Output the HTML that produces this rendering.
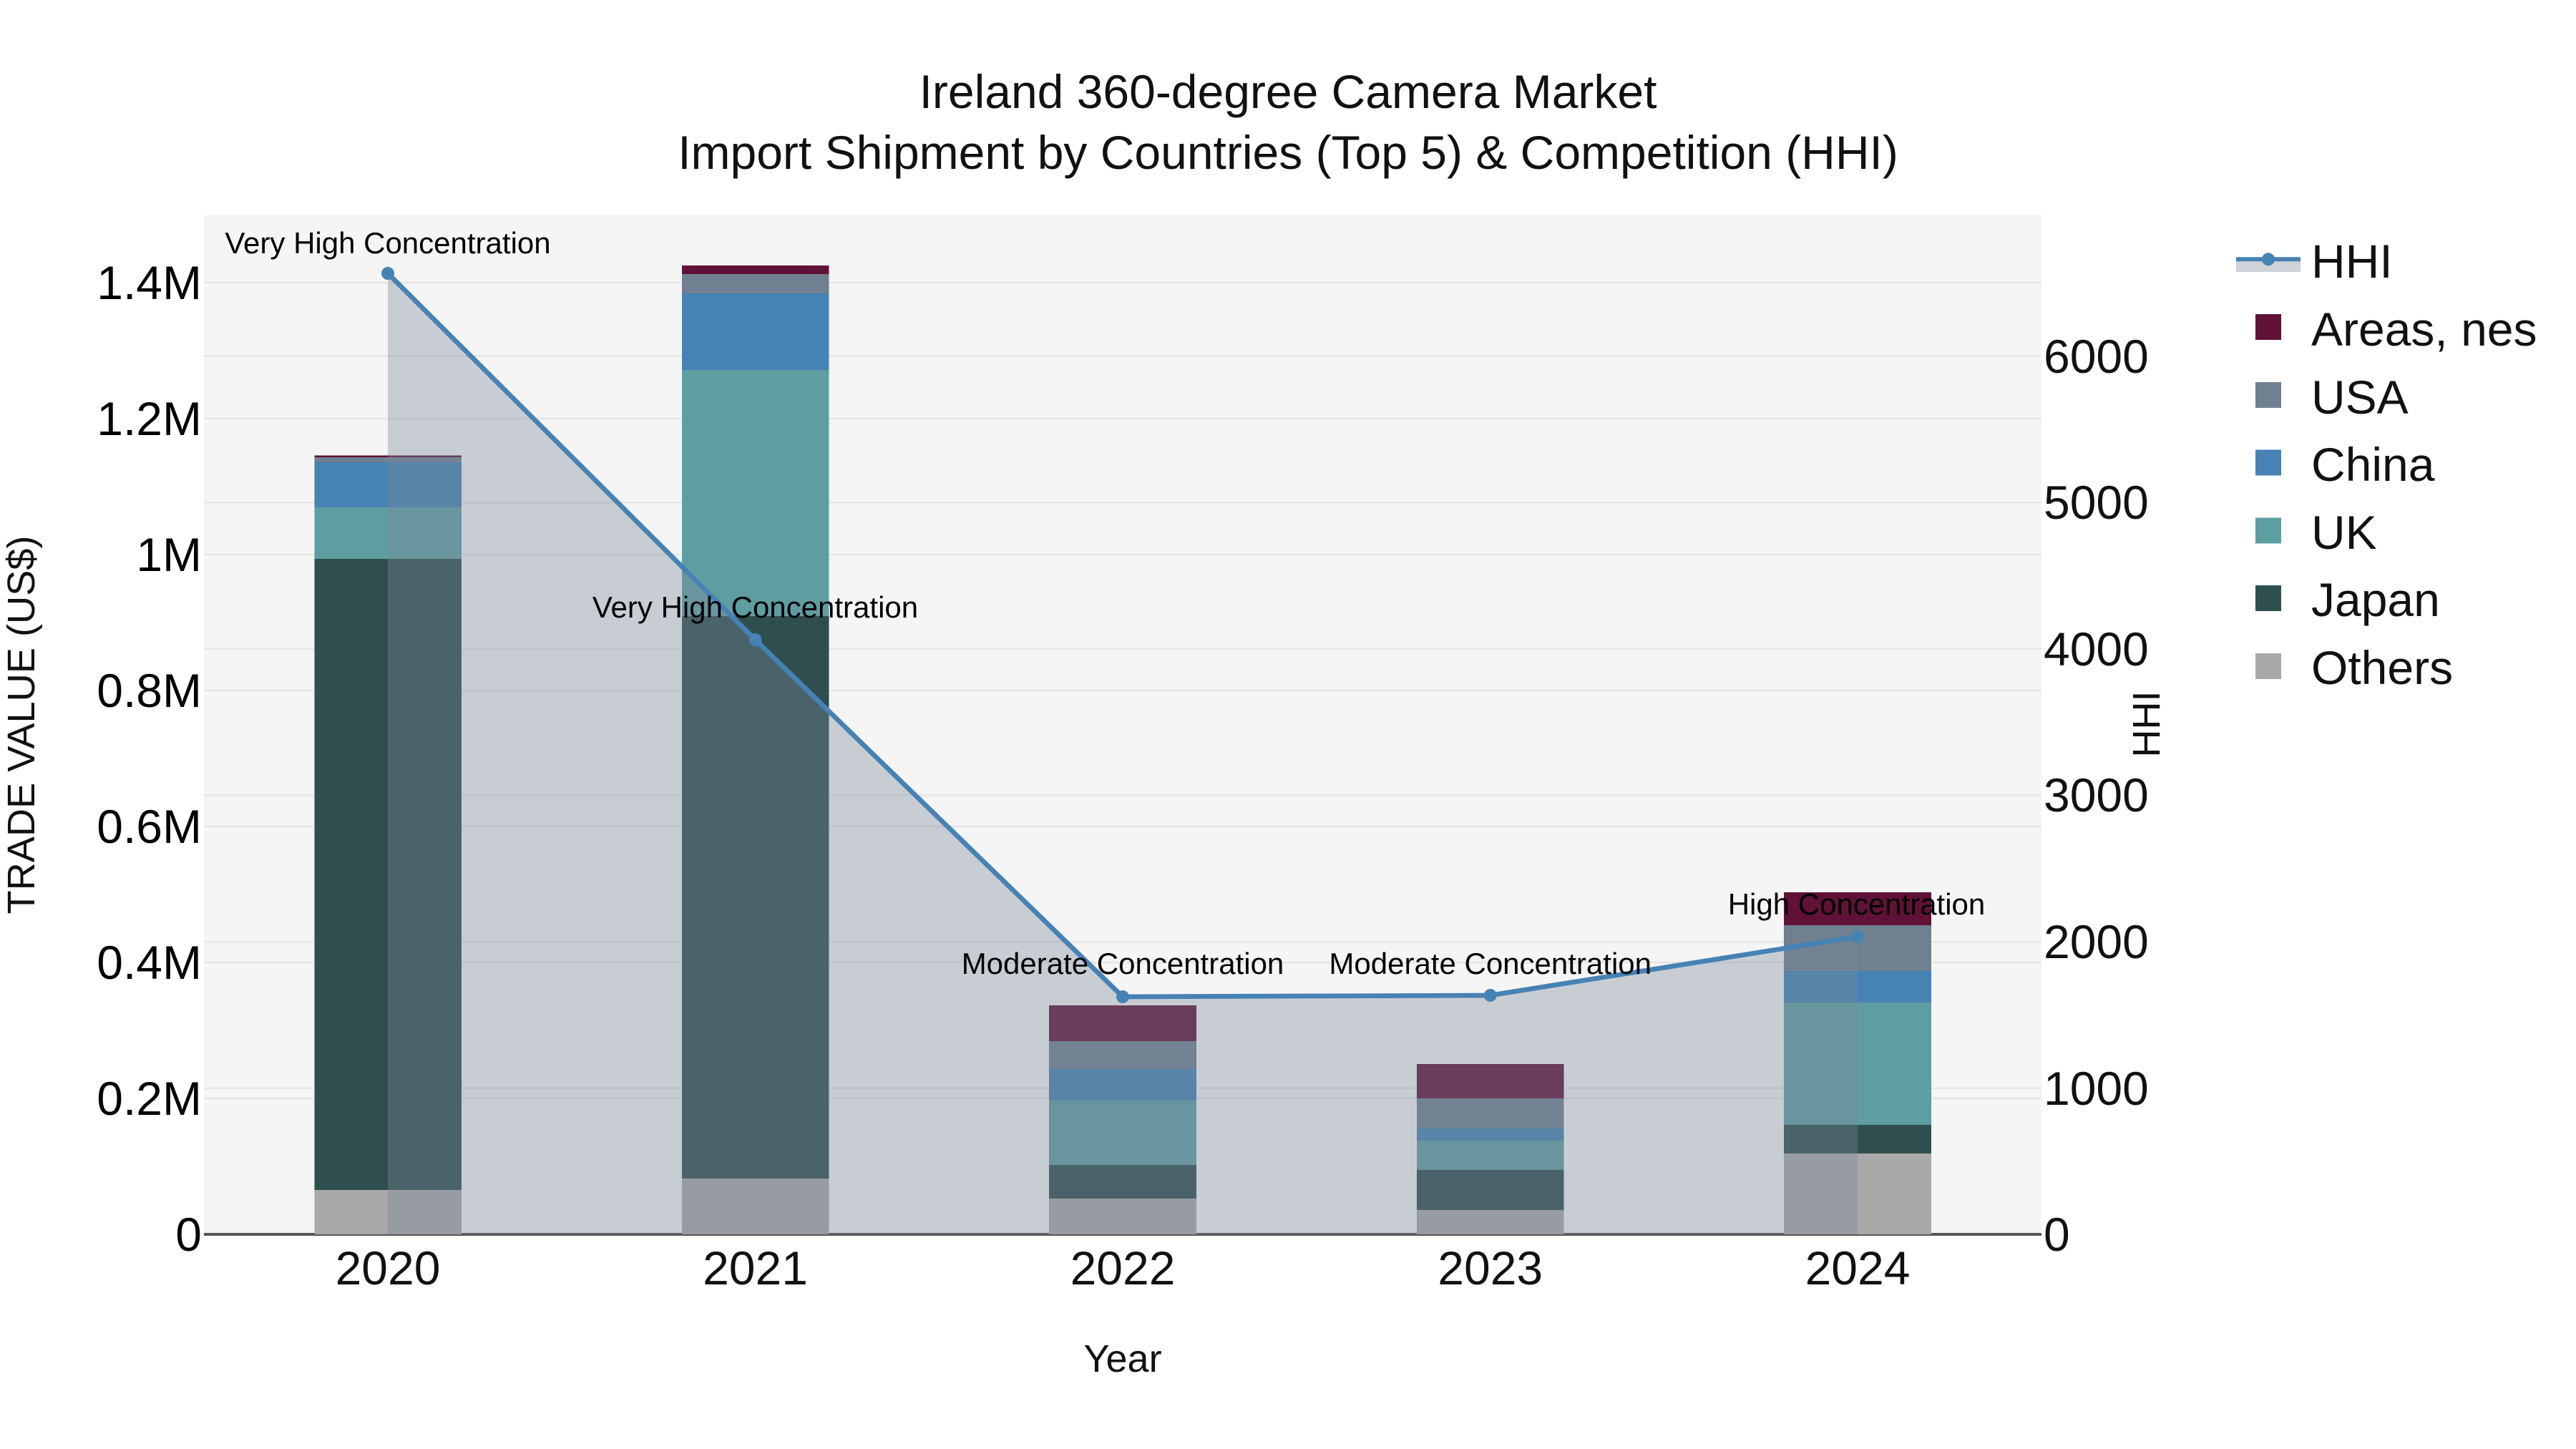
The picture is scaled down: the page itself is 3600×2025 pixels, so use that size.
<!DOCTYPE html>
<html>
<head>
<meta charset="utf-8">
<style>
html,body{margin:0;padding:0;background:#fff;width:3600px;height:2025px;overflow:hidden}
svg{display:block}
text{font-family:"Liberation Sans",Arial,sans-serif}
</style>
</head>
<body>
<svg width="3600" height="2025" viewBox="0 0 3600 2025" xmlns="http://www.w3.org/2000/svg">
<rect width="3600" height="2025" fill="#fff"/>
<rect x="285" y="300" width="2568" height="1425" fill="#f5f5f5"/>
<g stroke="#e6e6e6" stroke-width="2.5">
<path d="M285 395H2853M285 585H2853M285 775H2853M285 965H2853M285 1155H2853M285 1345H2853M285 1535H2853"/>
<path d="M285 497.7H2853M285 702.3H2853M285 906.9H2853M285 1111.5H2853M285 1316.1H2853M285 1520.7H2853"/>
</g>
<path d="M285 1725H2853" stroke="#555" stroke-width="4"/>

<g shape-rendering="crispEdges">
<!-- 2020 -->
<rect x="439.5" y="636.5" width="205.5" height="2.5" fill="#601236"/>
<rect x="439.5" y="639" width="205.5" height="7" fill="#708090"/>
<rect x="439.5" y="646" width="205.5" height="63" fill="#4682b4"/>
<rect x="439.5" y="709" width="205.5" height="72" fill="#5f9ea0"/>
<rect x="439.5" y="781" width="205.5" height="882" fill="#2f4f4f"/>
<rect x="439.5" y="1663" width="205.5" height="62" fill="#a9a9a9"/>
<!-- 2021 -->
<rect x="953" y="371" width="205.5" height="12" fill="#601236"/>
<rect x="953" y="383" width="205.5" height="27" fill="#708090"/>
<rect x="953" y="410" width="205.5" height="107" fill="#4682b4"/>
<rect x="953" y="517" width="205.5" height="344" fill="#5f9ea0"/>
<rect x="953" y="861" width="205.5" height="786" fill="#2f4f4f"/>
<rect x="953" y="1647" width="205.5" height="78" fill="#a9a9a9"/>
<!-- 2022 -->
<rect x="1466" y="1405" width="206" height="50" fill="#601236"/>
<rect x="1466" y="1455" width="206" height="39" fill="#708090"/>
<rect x="1466" y="1494" width="206" height="44" fill="#4682b4"/>
<rect x="1466" y="1538" width="206" height="90" fill="#5f9ea0"/>
<rect x="1466" y="1628" width="206" height="47" fill="#2f4f4f"/>
<rect x="1466" y="1675" width="206" height="50" fill="#a9a9a9"/>
<!-- 2023 -->
<rect x="1980" y="1487" width="205.5" height="48" fill="#601236"/>
<rect x="1980" y="1535" width="205.5" height="42" fill="#708090"/>
<rect x="1980" y="1577" width="205.5" height="17" fill="#4682b4"/>
<rect x="1980" y="1594" width="205.5" height="41" fill="#5f9ea0"/>
<rect x="1980" y="1635" width="205.5" height="56" fill="#2f4f4f"/>
<rect x="1980" y="1691" width="205.5" height="34" fill="#a9a9a9"/>
<!-- 2024 -->
<rect x="2493" y="1247" width="206" height="46" fill="#601236"/>
<rect x="2493" y="1293" width="206" height="64" fill="#708090"/>
<rect x="2493" y="1357" width="206" height="44" fill="#4682b4"/>
<rect x="2493" y="1401" width="206" height="171" fill="#5f9ea0"/>
<rect x="2493" y="1572" width="206" height="40" fill="#2f4f4f"/>
<rect x="2493" y="1612" width="206" height="113" fill="#a9a9a9"/>
</g>

<!-- HHI area + line -->
<path d="M542 382L1055.5 894L1569 1393L2082.7 1391L2596 1309V1725H542Z" fill="rgb(121,136,155)" fill-opacity="0.37"/>
<path d="M542 382L1055.5 894L1569 1393L2082.7 1391L2596 1309" fill="none" stroke="#4682b4" stroke-width="6.75" stroke-linejoin="round"/>
<g fill="#4682b4">
<circle cx="542" cy="382" r="9"/>
<circle cx="1055.5" cy="894" r="9"/>
<circle cx="1569" cy="1393" r="9"/>
<circle cx="2082.7" cy="1391" r="9"/>
<circle cx="2596" cy="1309" r="9"/>
</g>

<!-- annotations -->
<g font-size="42" fill="#000" text-anchor="middle">
<text x="542" y="354">Very High Concentration</text>
<text x="1055.5" y="863">Very High Concentration</text>
<text x="1569" y="1361">Moderate Concentration</text>
<text x="2082.7" y="1361">Moderate Concentration</text>
<text x="2594.5" y="1278">High Concentration</text>
</g>

<!-- title -->
<g font-size="66" fill="#111" text-anchor="middle">
<text x="1800" y="151">Ireland 360-degree Camera Market</text>
<text x="1800" y="236">Import Shipment by Countries (Top 5) &amp; Competition (HHI)</text>
</g>

<!-- left ticks -->
<g font-size="66" fill="#000" text-anchor="end">
<text x="282" y="418">1.4M</text>
<text x="282" y="608">1.2M</text>
<text x="282" y="798">1M</text>
<text x="282" y="988">0.8M</text>
<text x="282" y="1178">0.6M</text>
<text x="282" y="1368">0.4M</text>
<text x="282" y="1558">0.2M</text>
<text x="282" y="1748">0</text>
</g>
<!-- right ticks -->
<g font-size="66" fill="#111">
<text x="2856" y="521">6000</text>
<text x="2856" y="725">5000</text>
<text x="2856" y="930">4000</text>
<text x="2856" y="1134">3000</text>
<text x="2856" y="1339">2000</text>
<text x="2856" y="1544">1000</text>
<text x="2856" y="1748">0</text>
</g>
<!-- x ticks -->
<g font-size="66" fill="#111" text-anchor="middle">
<text x="542" y="1795">2020</text>
<text x="1055.5" y="1795">2021</text>
<text x="1569" y="1795">2022</text>
<text x="2082.7" y="1795">2023</text>
<text x="2596" y="1795">2024</text>
</g>

<!-- axis titles -->
<text x="1569" y="1917" font-size="54" fill="#111" text-anchor="middle">Year</text>
<text transform="translate(48 1013) rotate(-90)" font-size="54.2" fill="#111" text-anchor="middle">TRADE VALUE (US$)</text>
<text transform="translate(3018 1012) rotate(-90)" font-size="54" fill="#111" text-anchor="middle">HHI</text>

<!-- legend -->
<rect x="3125" y="362" width="90" height="18" fill="rgb(121,136,155)" fill-opacity="0.37"/>
<path d="M3125 362.3H3215" stroke="#4682b4" stroke-width="6"/>
<circle cx="3170" cy="362.3" r="9" fill="#4682b4"/>
<g shape-rendering="crispEdges">
<rect x="3152" y="439" width="36" height="36" fill="#601236"/>
<rect x="3152" y="534" width="36" height="36" fill="#708090"/>
<rect x="3152" y="628.5" width="36" height="36" fill="#4682b4"/>
<rect x="3152" y="723.5" width="36" height="36" fill="#5f9ea0"/>
<rect x="3152" y="818" width="36" height="36" fill="#2f4f4f"/>
<rect x="3152" y="913" width="36" height="36" fill="#a9a9a9"/>
</g>
<g font-size="66" fill="#111">
<text x="3230" y="388">HHI</text>
<text x="3230" y="483">Areas, nes</text>
<text x="3230" y="578">USA</text>
<text x="3230" y="672">China</text>
<text x="3230" y="767">UK</text>
<text x="3230" y="861">Japan</text>
<text x="3230" y="956">Others</text>
</g>
</svg>
</body>
</html>
